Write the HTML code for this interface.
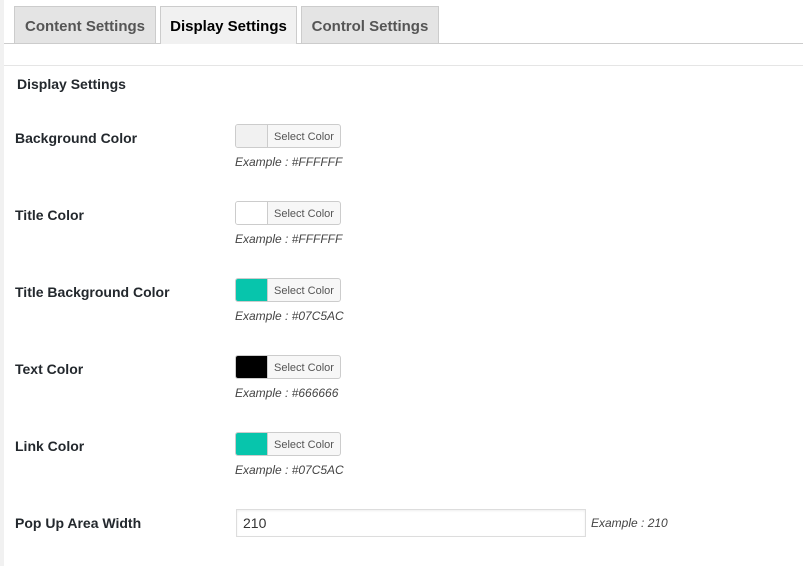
<!DOCTYPE html>
<html><head><style>
body{margin:0;width:803px;height:566px;background:#fff;font-family:"Liberation Sans",sans-serif;position:relative;overflow:hidden;color:#23282d}
.strip{position:absolute;left:0;top:0;width:4px;bottom:0;background:#f1f1f1}
.tab{position:absolute;top:6px;height:37px;border:1px solid #ccc;border-bottom:none;background:#e4e4e4;color:#555;font-size:15px;font-weight:bold;line-height:39px;text-align:center;box-sizing:border-box}
.line{position:absolute;left:4px;right:0;top:43px;height:1px;background:#ccc}
.panel{position:absolute;left:4px;right:0;top:65px;bottom:0;background:#fff;border-top:1px solid #e5e5e5}
.h{position:absolute;left:17px;top:76px;font-size:14px;font-weight:bold;color:#23282d}
.lab{position:absolute;left:15px;font-size:14px;font-weight:bold;color:#23282d}
.btn{position:absolute;left:235px;width:106px;height:24px;border:1px solid #ccc;border-radius:3px;background:#f7f7f7;box-sizing:border-box;overflow:hidden}
.sw{position:absolute;left:0;top:0;width:31px;height:22px;border-right:1px solid #ccc}
.bt{position:absolute;left:32px;right:0;top:1px;line-height:22px;text-align:center;font-size:11px;color:#555}
.ex{position:absolute;left:235px;font-size:12px;font-style:italic;color:#444}
</style></head><body>
<div class="strip"></div>
<div class="line"></div>
<div class="tab" style="left:14px;width:142px">Content Settings</div>
<div class="tab" style="left:160px;width:137px;background:#f1f1f1;color:#000;height:38px">Display Settings</div>
<div class="tab" style="left:301px;width:138px">Control Settings</div>
<div class="panel"></div>
<div class="h">Display Settings</div>

<div class="lab" style="top:130px">Background Color</div>
<div class="btn" style="top:124px"><div class="sw" style="background:#f1f1f1"></div><div class="bt">Select Color</div></div>
<div class="ex" style="top:155px">Example : #FFFFFF</div>

<div class="lab" style="top:207px">Title Color</div>
<div class="btn" style="top:201px"><div class="sw" style="background:#fff"></div><div class="bt">Select Color</div></div>
<div class="ex" style="top:232px">Example : #FFFFFF</div>

<div class="lab" style="top:284px">Title Background Color</div>
<div class="btn" style="top:278px"><div class="sw" style="background:#07c5ac"></div><div class="bt">Select Color</div></div>
<div class="ex" style="top:309px">Example : #07C5AC</div>

<div class="lab" style="top:361px">Text Color</div>
<div class="btn" style="top:355px"><div class="sw" style="background:#000"></div><div class="bt">Select Color</div></div>
<div class="ex" style="top:386px">Example : #666666</div>

<div class="lab" style="top:438px">Link Color</div>
<div class="btn" style="top:432px"><div class="sw" style="background:#07c5ac"></div><div class="bt">Select Color</div></div>
<div class="ex" style="top:463px">Example : #07C5AC</div>

<div class="lab" style="top:515px">Pop Up Area Width</div>
<div style="position:absolute;left:236px;top:509px;width:350px;height:28px;border:1px solid #ddd;box-sizing:border-box;box-shadow:inset 0 1px 2px rgba(0,0,0,.07);font-size:14px;line-height:27px;padding-left:6px;color:#333">210</div>
<div class="ex" style="left:591px;top:516px">Example : 210</div>
</body></html>
